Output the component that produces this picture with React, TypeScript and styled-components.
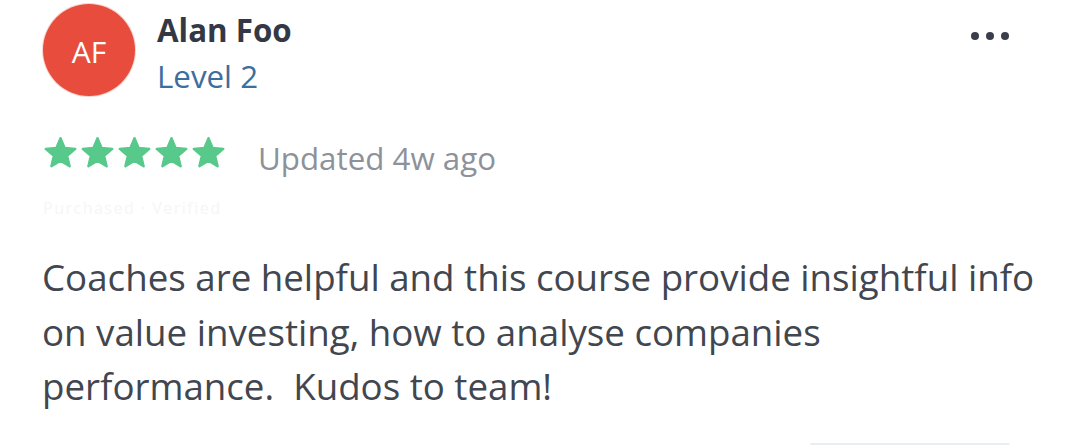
import React from "react";
import styled, { createGlobalStyle } from "styled-components";

const Global = createGlobalStyle`
  html, body { margin: 0; padding: 0; background: #ffffff; }
  body { font-family: "Open Sans", "Liberation Sans", sans-serif; }
`;

const Card = styled.div`
  position: relative;
  width: 1080px;
  height: 445px;
  box-sizing: border-box;
  padding: 4px 0 0 43px;
  overflow: hidden;
  background: #fff;
`;

const Header = styled.div`
  display: flex;
  align-items: flex-start;
  gap: 22px;
`;

const Avatar = styled.div`
  width: 92px;
  height: 92px;
  box-sizing: border-box;
  padding-top: 3px;
  border-radius: 50%;
  background: #e84c3d;
  box-shadow: 0 0 0 1px #f8d3cd;
  color: #fff;
  display: flex;
  align-items: center;
  justify-content: center;
  font-size: 30px;
  font-weight: 400;
  line-height: 1;
`;

const NameBlock = styled.div`
  display: flex;
  flex-direction: column;
  padding-top: 6px;
`;

const Name = styled.div`
  font-size: 31.3px;
  font-weight: 700;
  color: #343844;
  line-height: 40px;
`;

const Level = styled.div`
  font-size: 31.3px;
  color: #3d6e9e;
  line-height: 40px;
  margin-top: 6px;
`;

const More = styled.div`
  position: absolute;
  top: 32px;
  left: 971px;
  display: flex;
  gap: 7px;
`;

const Dot = styled.span`
  width: 8px;
  height: 8px;
  border-radius: 50%;
  background: #3a3d4a;
`;

const RatingRow = styled.div`
  display: flex;
  align-items: flex-start;
  margin-top: 41px;
  gap: 33px;
`;

const Stars = styled.div`
  display: flex;
  gap: 4px;
  margin-left: 1px;
`;

const StarIcon = styled.svg`
  display: block;
  width: 33px;
  height: 31px;
`;

const Updated = styled.div`
  font-size: 31.3px;
  color: #8d929a;
  line-height: 40px;
  margin-top: 1px;
`;

const Faint = styled.div`
  margin-top: 20px;
  font-size: 16px;
  color: #f5f6f7;
  line-height: 20px;
  letter-spacing: 1.5px;
`;

const Body = styled.p`
  margin: 32px 0 0 -1px;
  width: 1010px;
  font-size: 36.7px;
  line-height: 54.5px;
  color: #41464f;
  white-space: pre-wrap;
`;

const BottomEdge = styled.div`
  position: absolute;
  left: 810px;
  bottom: 0;
  width: 200px;
  height: 2px;
  background: #e6edf3;
  border-radius: 2px 2px 0 0;
`;

const STAR_POINTS =
  "16.5,1.2 20.62,11.03 31.24,11.91 23.16,18.86 25.61,29.24 16.5,23.7 7.39,29.24 9.84,18.86 1.76,11.91 12.38,11.03";

const Star = () => (
  <StarIcon viewBox="0 0 33 31">
    <polygon
      points={STAR_POINTS}
      fill="#57c98b"
      stroke="#57c98b"
      strokeWidth="2.4"
      strokeLinejoin="round"
    />
  </StarIcon>
);

export default function App() {
  return (
    <>
      <Global />
      <Card>
        <Header>
          <Avatar>AF</Avatar>
          <NameBlock>
            <Name>Alan Foo</Name>
            <Level>Level 2</Level>
          </NameBlock>
        </Header>
        <More>
          <Dot />
          <Dot />
          <Dot />
        </More>
        <RatingRow>
          <Stars>
            {[0, 1, 2, 3, 4].map((i) => (
              <Star key={i} />
            ))}
          </Stars>
          <Updated>Updated 4w ago</Updated>
        </RatingRow>
        <Faint>Purchased  ·  Verified</Faint>
        <Body>
          {"Coaches are helpful and this course provide insightful info on value investing, how to analyse companies performance.  Kudos to team!"}
        </Body>
        <BottomEdge />
      </Card>
    </>
  );
}
